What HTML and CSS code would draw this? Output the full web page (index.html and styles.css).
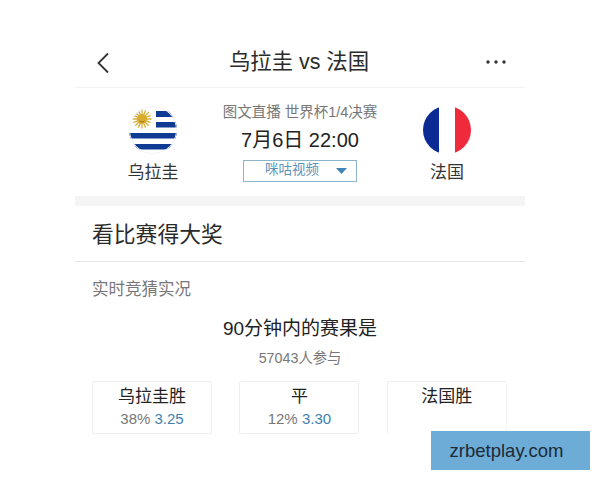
FILE: index.html
```html
<!DOCTYPE html>
<html lang="zh">
<head>
<meta charset="utf-8">
<title>乌拉圭 vs 法国</title>
<link rel="stylesheet" href="styles.css">
</head>
<body>
<main class="screen">
  <header class="nav">
    <svg class="back" width="14" height="22" viewBox="0 0 14 22"><path d="M12 1.5 2.5 11l9.5 9.5" fill="none" stroke="#333" stroke-width="1.8"/></svg>
    <h1 class="nav-title">乌拉圭 vs 法国</h1>
    <svg class="more" width="20" height="4" viewBox="0 0 20 4"><circle cx="2" cy="2" r="1.7"/><circle cx="10" cy="2" r="1.7"/><circle cx="18" cy="2" r="1.7"/></svg>
  </header>
  <section class="match">
    <div class="team">
      <svg class="flag" width="48" height="48" viewBox="0 0 48 48">
        <defs><clipPath id="uy"><circle cx="24" cy="24" r="24"/></clipPath></defs>
        <g clip-path="url(#uy)">
          <rect width="48" height="48" fill="#fff"/>
          <g fill="#0f3b94">
            <rect x="27" y="5" width="21" height="6"/>
            <rect x="27" y="16" width="21" height="5.5"/>
            <rect y="27" width="48" height="5.5"/>
            <rect y="38" width="48" height="5.5"/>
          </g>
          <g stroke="#d8b13c" stroke-width="1.3">
            <path d="M13 3.5v19M3.5 13h19M6.3 6.3l13.4 13.4M19.7 6.3 6.3 19.7M9.4 4.3l7.2 17.4M16.6 4.3 9.4 21.7M4.3 9.4l17.4 7.2M4.3 16.6l17.4-7.2"/>
          </g>
          <circle cx="13" cy="13" r="5" fill="#d9ab2e"/>
          <path d="M10.5 15.2q2.5 1.6 5 0" fill="none" stroke="#8a6a16" stroke-width=".8"/>
          <circle cx="24" cy="24" r="23.5" fill="none" stroke="#f1f1f1"/>
        </g>
      </svg>
      <span class="team-name">乌拉圭</span>
    </div>
    <div class="info">
      <p class="league">图文直播 世界杯1/4决赛</p>
      <p class="time">7月6日 22:00</p>
      <div class="source">
        <span class="source-name">咪咕视频</span>
        <svg width="11" height="6" viewBox="0 0 11 6"><path d="M0 0h11L5.5 6z" fill="#3f85b8"/></svg>
      </div>
    </div>
    <div class="team">
      <svg class="flag" width="48" height="48" viewBox="0 0 48 48">
        <defs><clipPath id="fr"><circle cx="24" cy="24" r="24"/></clipPath></defs>
        <g clip-path="url(#fr)">
          <rect width="16" height="48" fill="#0b2a94"/>
          <rect x="16" width="16" height="48" fill="#fff"/>
          <rect x="32" width="16" height="48" fill="#ee2a3c"/>
        </g>
      </svg>
      <span class="team-name">法国</span>
    </div>
  </section>
  <div class="band"></div>
  <h2 class="prize">看比赛得大奖</h2>
  <section class="quiz">
    <h3 class="quiz-label">实时竞猜实况</h3>
    <p class="question">90分钟内的赛果是</p>
    <p class="count">57043人参与</p>
    <div class="options">
      <div class="option">
        <span class="option-name">乌拉圭胜</span>
        <span class="odds">38% <b>3.25</b></span>
      </div>
      <div class="option">
        <span class="option-name">平</span>
        <span class="odds">12% <b>3.30</b></span>
      </div>
      <div class="option option-faded">
        <span class="option-name">法国胜</span>
      </div>
    </div>
  </section>
</main>
<div class="watermark">zrbetplay.com</div>
</body>
</html>
```
FILE: styles.css
```css
* { box-sizing: border-box; }
html, body { margin: 0; padding: 0; background: #fff; }
body {
  height: 480px;
  overflow: hidden;
  position: relative;
  font-family: "Liberation Sans", "Noto Sans CJK SC", sans-serif;
  color: #222;
}
h1, h2, h3, p { margin: 0; font-weight: 400; }
.screen { width: 450px; margin-left: 75px; padding-top: 34px; }
.nav {
  height: 54px;
  padding: 0 19px 0 21px;
  display: flex;
  align-items: center;
  justify-content: space-between;
  border-bottom: 1px solid #f2f2f2;
}
.nav-title { font-size: 21.4px; line-height: 50px; color: #2b2b2b; margin: 3px 0 0 2px; }
.back { margin-top: 4px; }
.more { fill: #333; margin-top: 3px; }
.match {
  height: 108px;
  display: grid;
  grid-template-columns: 156px 138px 156px;
}
.team {
  display: flex;
  flex-direction: column;
  align-items: center;
  padding-top: 18px;
}
.flag { display: block; }
.team-name { font-size: 17px; line-height: 24px; margin-top: 7px; color: #333; }
.info { display: flex; flex-direction: column; align-items: center; margin: 0 -20px; padding-top: 14px; }
.league { font-size: 14.5px; line-height: 20px; color: #777; white-space: nowrap; }
.time { font-size: 20px; line-height: 26px; margin-top: 5px; color: #222; white-space: nowrap; }
.source {
  width: 114px;
  height: 22px;
  margin-top: 7px;
  border: 1px solid #8db4c8;
  display: flex;
  align-items: center;
  justify-content: space-between;
  padding: 0 9px 0 21px;
  font-size: 13.5px;
  color: #5d93b8;
}
.source-name { line-height: 18px; margin-top: -3px; }
.band { height: 10px; background: #f5f5f5; }
.prize {
  height: 56px;
  padding-left: 17px;
  font-size: 21.8px;
  line-height: 57px;
  color: #2a2a2a;
  border-bottom: 1px solid #e8e8e8;
}
.quiz { padding: 0 17px; }
.quiz-label { font-size: 16.5px; font-weight: 400; line-height: 24px; margin-top: 15px; color: #777; }
.question { font-size: 19px; line-height: 26px; margin-top: 15px; text-align: center; color: #222; }
.count { font-size: 14.3px; line-height: 20px; margin-top: 6px; text-align: center; color: #777; }
.options {
  display: grid;
  grid-template-columns: repeat(3, 120px);
  column-gap: 27.4px;
  margin-top: 13px;
  width: 416px;
}
.option {
  height: 53px;
  border: 1px solid #eee;
  border-radius: 2px;
  display: flex;
  flex-direction: column;
  align-items: center;
  padding-top: 3px;
}
.option-faded { border-bottom-color: transparent; border-right-color: #f6f6f6; }
.option-name { font-size: 17px; line-height: 24px; color: #222; }
.odds { font-size: 15px; line-height: 20px; color: #777; }
.odds b { font-weight: 400; color: #3f7fae; }
.watermark {
  position: absolute;
  left: 431px;
  top: 431px;
  width: 159px;
  height: 39px;
  padding-right: 8px;
  background: #6dacd6;
  color: #1d2a36;
  font-size: 18.5px;
  line-height: 39px;
  text-align: center;
}
```
